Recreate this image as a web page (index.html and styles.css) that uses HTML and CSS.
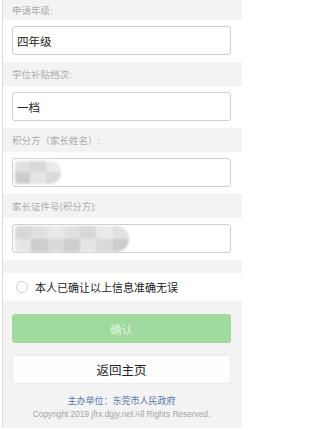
FILE: index.html
```html
<!DOCTYPE html>
<html lang="zh-CN">
<head>
<meta charset="utf-8">
<title>确认信息</title>
<link rel="stylesheet" href="styles.css">
</head>
<body>
<div class="page">
  <div class="label first">申请年级:</div>
  <div class="field-row"><div class="field">四年级</div></div>

  <div class="label">学位补贴档次:</div>
  <div class="field-row"><div class="field">一档</div></div>

  <div class="label">积分方（家长姓名）:</div>
  <div class="field-row">
    <div class="field">
      <div class="mosaic short">
        <span class="m1"></span><span class="m2"></span><span class="m3"></span>
      </div>
    </div>
  </div>

  <div class="label">家长证件号(积分方):</div>
  <div class="field-row">
    <div class="field">
      <div class="mosaic long">
        <span class="m2"></span><span class="m1"></span><span class="m3"></span><span class="m1"></span><span class="m2"></span><span class="m3"></span><span class="m1"></span>
      </div>
    </div>
  </div>

  <div class="check-row">
    <span class="radio"></span>
    <span class="check-text">本人已确让以上信息准确无误</span>
  </div>

  <div class="actions">
    <div class="btn confirm">确认</div>
    <div class="btn back">返回主页</div>
  </div>

  <div class="footer">
    <div class="sponsor">主办单位：东莞市人民政府</div>
    <div class="copy">Copyright 2019 jfrx.dgjy.net All Rights Reserved.</div>
  </div>
</div>
</body>
</html>
```

FILE: styles.css
```css
html, body {
  margin: 0;
  padding: 0;
  background: #ffffff;
}
body {
  width: 242px;
  font-family: "Liberation Sans", "Noto Sans CJK SC", sans-serif;
}
.page {
  margin-left: 2px;
  border-left: 1px solid #dcdcdc;
  background: #f3f3f3;
  min-height: 428px;
  box-sizing: border-box;
}
.label {
  height: 24px;
  display: flex;
  align-items: center;
  padding-left: 9px;
  font-size: 9.5px;
  color: #adadad;
}
.label.first {
  height: 20px;
  padding-bottom: 1px;
  box-sizing: border-box;
}
.field-row {
  background: #ffffff;
  padding: 6px 11px 7px 9px;
}
.field {
  height: 29px;
  border: 1px solid #cfcfcf;
  border-radius: 3px;
  box-sizing: border-box;
  display: flex;
  align-items: center;
  padding-left: 4px;
  font-size: 11.5px;
  color: #222;
  background: #fff;
}
.mosaic {
  display: flex;
  height: 23px;
  overflow: hidden;
  background: #f0f0f0;
  filter: blur(0.8px);
  margin-left: -2px;
}
.mosaic span {
  flex: 1;
}
.mosaic.short {
  width: 46px;
  border-radius: 4px 12px 12px 4px;
}
.mosaic.long {
  width: 114px;
  height: 26px;
  border-radius: 4px 13px 13px 4px;
}
.m1 { background: linear-gradient(#e0e0e0 50%, #cdcdcd 50%); }
.m2 { background: linear-gradient(#d8d8d8 50%, #e5e5e5 50%); }
.m3 { background: linear-gradient(#eaeaea 50%, #dadada 50%); }

.check-row {
  margin-top: 13px;
  height: 28px;
  background: #ffffff;
  display: flex;
  align-items: center;
  padding-left: 13px;
  gap: 7px;
}
.radio {
  width: 12px;
  height: 12px;
  border: 1px solid #cfcfcf;
  border-radius: 50%;
  box-sizing: border-box;
  background: #fff;
}
.check-text {
  font-size: 11px;
  color: #222;
}
.actions {
  padding: 13px 11px 0 9px;
  display: flex;
  flex-direction: column;
  gap: 12px;
}
.btn {
  height: 29px;
  border-radius: 3px;
  box-sizing: border-box;
  display: flex;
  align-items: center;
  justify-content: center;
}
.confirm {
  background: #a1da9f;
  color: #dff3de;
  font-size: 11.5px;
}
.back {
  background: #fdfdfd;
  border: 1px solid #ececec;
  color: #222;
  font-size: 12.5px;
}
.footer {
  padding-top: 11px;
  text-align: center;
  padding-right: 2px;
}
.sponsor {
  font-size: 9px;
  color: #5876a8;
  line-height: 13px;
}
.copy {
  font-size: 8.3px;
  color: #a3a3a3;
  line-height: 13px;
}
```
